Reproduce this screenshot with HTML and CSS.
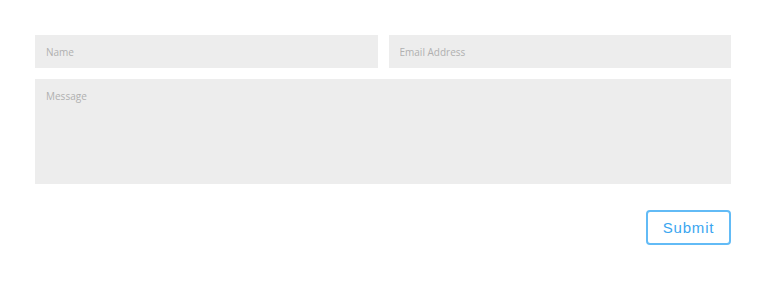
FILE: index.html
```
<!DOCTYPE html>
<html>
<head>
<meta charset="utf-8">
<link rel="stylesheet" href="styles.css">
</head>
<body>
<form class="contact">
  <div class="row">
    <input class="field" type="text" placeholder="Name">
    <input class="field" type="text" placeholder="Email Address">
  </div>
  <textarea class="field message" placeholder="Message"></textarea>
  <div class="actions">
    <button class="submit" type="button">Submit</button>
  </div>
</form>
</body>
</html>
```
FILE: styles.css
```
html, body {
  margin: 0;
  padding: 0;
  background: #ffffff;
}
.contact {
  box-sizing: border-box;
  width: 696px;
  margin: 35px 0 0 35px;
  display: flex;
  flex-direction: column;
}
.row {
  display: flex;
  gap: 11px;
  margin-bottom: 11px;
}
.field {
  box-sizing: border-box;
  border: none;
  outline: none;
  background: #ededed;
  font-family: "Open Sans", sans-serif;
  font-size: 10px;
  color: #999;
  padding: 0 11px;
  height: 33px;
  flex: 1;
  border-radius: 0;
}
.field::placeholder {
  color: #b0b0b0;
}
.message {
  flex: none;
  height: 105px;
  resize: none;
  padding: 10px 11px;
  display: block;
  width: 100%;
}
.actions {
  display: flex;
  justify-content: flex-end;
  margin-top: 26px;
}
.submit {
  box-sizing: border-box;
  width: 85px;
  height: 35px;
  background: #fff;
  border: 2px solid #62bbf6;
  border-radius: 4px;
  color: #3aa6f0;
  font-family: "Liberation Sans", Arial, sans-serif;
  font-size: 15px;
  letter-spacing: 0.8px;
  padding: 0;
}
```
